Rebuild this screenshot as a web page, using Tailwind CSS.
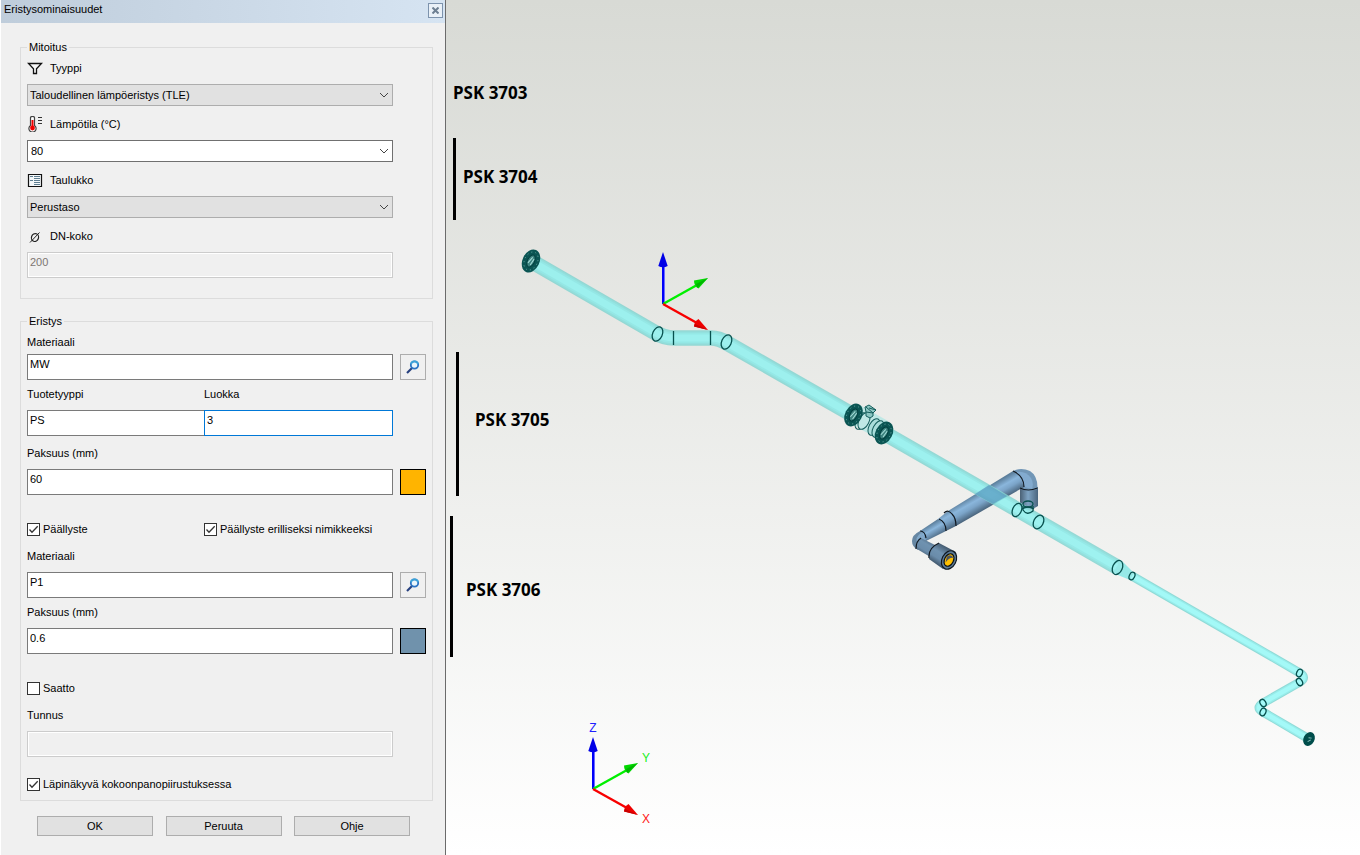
<!DOCTYPE html>
<html lang="fi">
<head>
    <meta charset="UTF-8">
    <meta name="viewport" content="width=device-width, initial-scale=1.0">
    <title>Eristysominaisuudet</title>
    <script src="https://cdn.jsdelivr.net/npm/@tailwindcss/browser@4"></script>
</head>
<body class="flex min-h-screen bg-white font-['Liberation_Sans',sans-serif] text-[11px] leading-4 text-black">

    <!-- Insulation properties dialog -->
    <form class="w-[446px] shrink-0 border-l border-l-white border-r border-r-[#6b6b6b] bg-[#f0f0f0]">
        <header class="flex h-[23px] items-start justify-between bg-linear-to-r from-[#bfcddb] to-[#d6e4f2] pl-[3px] pr-[2px] pt-[1px]">
            <h1>Eristysominaisuudet</h1>
            <button type="button" aria-label="Sulje" class="mt-[2px] flex size-[15px] items-center justify-center border border-[#7d93ad] bg-[#e9f0f7]">
                <svg class="size-[7px]" viewBox="0 0 7 7" stroke="#6d7f92" stroke-width="2"><path d="M0.5 0.5L6.5 6.5M6.5 0.5L0.5 6.5"/></svg>
            </button>
        </header>

        <div class="pl-[19px] pr-3 pt-[17px]">
            <fieldset class="border border-[#dcdcdc] px-[6px] pb-5">
                <legend class="px-[2px] leading-[14px]">Mitoitus</legend>

                <div class="mr-[33px] flex flex-col gap-2 pt-[6px]">
                    <label for="type" class="flex items-center gap-[7px]">
                        <svg class="size-4" viewBox="0 0 16 16" fill="none" stroke="#111" stroke-width="1.3"><path d="M1.5 3.5H14.5L9.5 8.8V13.5H6.5V8.8Z" fill="#f8f8f8"/></svg>
                        Tyyppi
                    </label>
                    <div class="relative mb-[2px]">
                        <select id="type" class="block h-[22px] w-full appearance-none border border-[#adadad] bg-[#e1e1e1] px-[2px]">
                            <option>Taloudellinen lämpöeristys (TLE)</option>
                        </select>
                        <svg class="pointer-events-none absolute right-1 top-[8px] h-[6px] w-[10px]" viewBox="0 0 10 6" fill="none" stroke="#444"><path d="M1 1L5 5L9 1"/></svg>
                    </div>

                    <label for="temp" class="flex items-center gap-[7px]">
                        <svg class="size-4" viewBox="0 0 16 16" fill="none">
                            <path d="M3.5 9.5V1.5Q3.5 0.5 5.5 0.5Q7.5 0.5 7.5 1.5V9.5A3.6 3.6 0 1 1 3.5 9.5Z" fill="#fff" stroke="#444" stroke-width="1.2"/>
                            <path d="M5.5 4V11" stroke="#f00000" stroke-width="2"/>
                            <circle cx="5.5" cy="12" r="2.4" fill="#f00000"/>
                            <path d="M11 1.5H15M11 4.5H15M11 7.5H15" stroke="#333"/>
                        </svg>
                        Lämpötila (°C)
                    </label>
                    <div class="relative mb-[2px]">
                        <select id="temp" class="block h-[22px] w-full appearance-none border border-[#707070] bg-white px-[3px]">
                            <option>80</option>
                        </select>
                        <svg class="pointer-events-none absolute right-1 top-[8px] h-[6px] w-[10px]" viewBox="0 0 10 6" fill="none" stroke="#444"><path d="M1 1L5 5L9 1"/></svg>
                    </div>

                    <label for="table" class="flex items-center gap-[7px]">
                        <svg class="size-4" viewBox="0 0 16 16" fill="none">
                            <path d="M1.5 2.5H14.5V14.5H1.5Z" fill="#f4f8fa" stroke="#111" stroke-width="1.2"/>
                            <path d="M3 4.5H6M3 8.5H6M7 4.5H13M7 6.5H13M7 8.5H13M7 10.5H13M7 12.5H13" stroke="#5f7f92"/>
                        </svg>
                        Taulukko
                    </label>
                    <div class="relative mb-[2px]">
                        <select id="table" class="block h-[22px] w-full appearance-none border border-[#adadad] bg-[#e1e1e1] px-[2px]">
                            <option>Perustaso</option>
                        </select>
                        <svg class="pointer-events-none absolute right-1 top-[8px] h-[6px] w-[10px]" viewBox="0 0 10 6" fill="none" stroke="#444"><path d="M1 1L5 5L9 1"/></svg>
                    </div>

                    <label for="dn" class="flex items-center gap-[7px]">
                        <svg class="size-4" viewBox="0 0 16 16" fill="none" stroke="#222"><ellipse cx="8" cy="9.5" rx="3.5" ry="4" transform="rotate(20 8 9.5)" stroke-width="1.2"/><path d="M3 14.5L12.5 4.5"/></svg>
                        DN-koko
                    </label>
                    <input id="dn" type="text" value="200" disabled class="h-[26px] border border-[#cccccc] bg-[#f0f0f0] px-[2px] pb-[6px] text-[#7d7672] shadow-[inset_0_0_0_1px_#fff]">
                </div>
            </fieldset>

            <fieldset class="mt-[15px] border border-[#dcdcdc] px-[6px] pb-2">
                <legend class="px-[2px] leading-[14px]">Eristys</legend>

                <label for="material" class="block pt-[6px]">Materiaali</label>
                <div class="mt-1 flex gap-[7px]">
                    <input id="material" type="text" value="MW" class="h-[26px] min-w-0 flex-1 border border-[#7a7a7a] bg-white px-[2px] pb-[6px]">
                    <button type="button" aria-label="Hae materiaali" class="flex size-[26px] items-center justify-center border border-[#adadad]">
                        <svg class="size-4" viewBox="0 0 16 16" fill="none"><path d="M7 9L2 14" stroke="#27407f" stroke-width="2.2"/><circle cx="9.5" cy="6" r="3.7" fill="#eaf6fc" stroke="#2b73c4" stroke-width="1.8"/><path d="M5.9 5.2A3.7 3.7 0 0 1 13.1 5.2" stroke="#3ba3d8" stroke-width="1.8"/></svg>
                    </button>
                </div>

                <div class="mr-[33px] mt-[6px] grid grid-cols-[177px_1fr] gap-y-2">
                    <label for="product">Tuotetyyppi</label>
                    <label for="class">Luokka</label>
                    <input id="product" type="text" value="PS" class="h-[26px] min-w-0 border border-r-0 border-[#7a7a7a] bg-white px-[2px] pb-[6px]">
                    <input id="class" type="text" value="3" class="h-[26px] min-w-0 border border-[#0078d7] bg-white px-[2px] pb-[6px] outline-none">
                </div>

                <label for="thickness" class="mt-[9px] block">Paksuus (mm)</label>
                <div class="mt-2 flex gap-[7px]">
                    <input id="thickness" type="text" value="60" class="h-[26px] min-w-0 flex-1 border border-[#7a7a7a] bg-white px-[2px] pb-[6px]">
                    <button type="button" aria-label="Eristyksen väri" class="size-[26px] border border-black bg-[#ffb400]"></button>
                </div>

                <div class="mt-[26px] grid grid-cols-[177px_1fr]">
                    <label class="relative flex items-center gap-[3px]">
                        <input type="checkbox" checked class="peer size-[13px] appearance-none border border-[#333] bg-white">
                        <svg class="pointer-events-none absolute left-0 hidden size-[13px] peer-checked:block" viewBox="0 0 13 13" fill="none" stroke="#333" stroke-width="1.3"><path d="M2.5 6.5L5 9.3L10.7 3.3"/></svg>
                        Päällyste
                    </label>
                    <label class="relative flex items-center gap-[3px]">
                        <input type="checkbox" checked class="peer size-[13px] appearance-none border border-[#333] bg-white">
                        <svg class="pointer-events-none absolute left-0 hidden size-[13px] peer-checked:block" viewBox="0 0 13 13" fill="none" stroke="#333" stroke-width="1.3"><path d="M2.5 6.5L5 9.3L10.7 3.3"/></svg>
                        Päällyste erilliseksi nimikkeeksi
                    </label>
                </div>

                <label for="coating" class="mt-[11px] block">Materiaali</label>
                <div class="mt-2 flex gap-[7px]">
                    <input id="coating" type="text" value="P1" class="h-[26px] min-w-0 flex-1 border border-[#7a7a7a] bg-white px-[2px] pb-[6px]">
                    <button type="button" aria-label="Hae päällyste" class="flex size-[26px] items-center justify-center border border-[#adadad]">
                        <svg class="size-4" viewBox="0 0 16 16" fill="none"><path d="M7 9L2 14" stroke="#27407f" stroke-width="2.2"/><circle cx="9.5" cy="6" r="3.7" fill="#eaf6fc" stroke="#2b73c4" stroke-width="1.8"/><path d="M5.9 5.2A3.7 3.7 0 0 1 13.1 5.2" stroke="#3ba3d8" stroke-width="1.8"/></svg>
                    </button>
                </div>

                <label for="coating-thickness" class="mt-[6px] block">Paksuus (mm)</label>
                <div class="mt-2 flex gap-[7px]">
                    <input id="coating-thickness" type="text" value="0.6" class="h-[26px] min-w-0 flex-1 border border-[#7a7a7a] bg-white px-[2px] pb-[6px]">
                    <button type="button" aria-label="Päällysteen väri" class="size-[26px] border border-black bg-[#7092ac]"></button>
                </div>

                <label class="relative mt-[26px] flex items-center gap-[3px]">
                    <input type="checkbox" class="peer size-[13px] appearance-none border border-[#333] bg-white">
                    <svg class="pointer-events-none absolute left-0 hidden size-[13px] peer-checked:block" viewBox="0 0 13 13" fill="none" stroke="#333" stroke-width="1.3"><path d="M2.5 6.5L5 9.3L10.7 3.3"/></svg>
                    Saatto
                </label>

                <label for="tag" class="mt-[11px] block">Tunnus</label>
                <div class="mr-[33px] mt-2 flex">
                    <input id="tag" type="text" disabled class="h-[26px] min-w-0 flex-1 border border-[#cccccc] bg-[#f0f0f0] px-[2px] pb-[6px] shadow-[inset_0_0_0_1px_#fff]">
                </div>

                <label class="relative mt-[19px] flex items-center gap-[3px]">
                    <input type="checkbox" checked class="peer size-[13px] appearance-none border border-[#333] bg-white">
                    <svg class="pointer-events-none absolute left-0 hidden size-[13px] peer-checked:block" viewBox="0 0 13 13" fill="none" stroke="#333" stroke-width="1.3"><path d="M2.5 6.5L5 9.3L10.7 3.3"/></svg>
                    Läpinäkyvä kokoonpanopiirustuksessa
                </label>
            </fieldset>

            <div class="ml-[17px] mr-[23px] mt-[15px] flex justify-between">
                <button type="submit" class="h-5 w-[116px] border border-[#adadad] bg-[#e1e1e1]">OK</button>
                <button type="button" class="h-5 w-[116px] border border-[#adadad] bg-[#e1e1e1]">Peruuta</button>
                <button type="button" class="h-5 w-[116px] border border-[#adadad] bg-[#e1e1e1]">Ohje</button>
            </div>
        </div>
    </form>

    <!-- 3D view of the pipeline -->
    <main class="min-w-0 flex-1 bg-linear-to-b from-[#d8dad5] to-white">
        <svg class="block w-full" viewBox="446 0 914 855" fill="none" role="img" aria-label="Putkilinja">
            <defs>
                <linearGradient id="blueUp" gradientUnits="userSpaceOnUse" x1="980" y1="491" x2="989" y2="507">
                    <stop offset="0" stop-color="#5c7f9c"/><stop offset=".35" stop-color="#8ab6dc"/><stop offset=".6" stop-color="#7ba4c8"/><stop offset="1" stop-color="#4b667e"/>
                </linearGradient>
                <linearGradient id="blueSmall" gradientUnits="userSpaceOnUse" x1="929" y1="525" x2="936" y2="537">
                    <stop offset="0" stop-color="#5c7f9c"/><stop offset=".4" stop-color="#8ab6dc"/><stop offset="1" stop-color="#4f6c86"/>
                </linearGradient>
                <linearGradient id="blueDown" gradientUnits="userSpaceOnUse" x1="946" y1="546" x2="935" y2="564">
                    <stop offset="0" stop-color="#40566a"/><stop offset=".4" stop-color="#6f92b0"/><stop offset=".7" stop-color="#6a8caa"/><stop offset="1" stop-color="#3e5468"/>
                </linearGradient>
                <linearGradient id="blueVert" gradientUnits="userSpaceOnUse" x1="1020" y1="0" x2="1038" y2="0">
                    <stop offset="0" stop-color="#4a6074"/><stop offset=".45" stop-color="#7da2c2"/><stop offset="1" stop-color="#4a657e"/>
                </linearGradient>

                <!-- main pipe run, shaded by stacking narrower strokes -->
                <path id="wide" d="M531 261L654 332Q664 338 674 338H711Q719 338 727 343L853 415M884 433L1117 567"/>
                <path id="thin" d="M1132 576L1300 673Q1307 677.5 1300 682L1263 703Q1255 708 1263 712L1309 739"/>

                <g id="flange">
                    <ellipse rx="8.5" ry="12" fill="#0a5553"/>
                    <ellipse rx="6.5" ry="9.5" stroke="#65a5a1" stroke-width="0.8" stroke-dasharray="1.2 3"/>
                    <ellipse rx="3.5" ry="6.5" fill="#3d8480" stroke="#013f3e"/>
                    <path d="M-2 3L0 -4M1 4L2 -3" stroke="#a7dfda"/>
                </g>

                <g id="axes">
                    <path d="M0.5 0V-38" stroke="#0000fa" stroke-width="3"/>
                    <path d="M1.5 -1V-37" stroke="#6c6cff"/>
                    <path d="M0 0L34 -19" stroke="#00f000" stroke-width="2.4"/>
                    <path d="M0 0L34 19" stroke="#f80000" stroke-width="2.4"/>
                    <path d="M0 -52L4.7 -38Q0 -35.5 -4.7 -38Z" fill="#0000e6"/>
                    <path d="M45 -26L35.5 -15.5Q31 -18 31 -23.5Z" fill="#00d800"/>
                    <path d="M45 26L31 22.5Q31 17.5 35.5 15Z" fill="#ee0000"/>
                    <path d="M45 -26L34 -16L33 -20Z" fill="#00b400"/>
                    <path d="M45 26L31 22.5L32 20Z" fill="#c80000"/>
                </g>
            </defs>

            <!-- blue branch -->
            <path d="M1020 487H1038V506Q1029 513 1020 506Z" fill="url(#blueVert)"/>
            <path d="M1013 471Q1021 467 1030 471Q1038 476 1037.5 489Q1029 492 1020 488L1024 486Z" fill="#7196b6"/>
            <path d="M1014 473Q1024 469 1031 478Q1034 483 1032 489L1024 487Z" fill="#83abcf"/>
            <path d="M948 511L1013 471Q1021 475 1024 487L956 526Z" fill="url(#blueUp)"/>
            <path d="M938 519L948 511Q955 517 956 526L946 531Z" fill="url(#blueUp)"/>
            <path d="M920 531L938 519Q945 523 946 531L926 541Z" fill="url(#blueSmall)"/>
            <path d="M920 531Q912 535 912 541Q912 547 918 550L927 542Z" fill="#6687a3"/>
            <path d="M921 533Q915 537 917 543L926 540Z" fill="#82a9cb"/>
            <path d="M921 538L939 547L932 558L917 549Q916 542 921 538Z" fill="url(#blueDown)"/>
            <path d="M939 543L956 552Q950 566 943 569L929 559Q929 547 939 543Z" fill="url(#blueDown)"/>
            <g stroke="#101820" stroke-width="1.2">
                <path d="M1013 471Q1024 476 1024 487M1020 488Q1028 492 1037.5 488M944 513Q948 509 952 514Q956 518 956 526M939 519Q946 522 946 531M920 531Q925 531 926 538M916 549Q916 541 921 538M929 558Q928 548 939 543"/>
            </g>
            <g transform="translate(949 560) rotate(27)">
                <ellipse rx="7" ry="9.7" fill="#5d7d99" stroke="#101820" stroke-width="1.2"/>
                <ellipse rx="4.5" ry="6.6" fill="#ffc000" stroke="#0b1118" stroke-width="1.2"/>
                <path d="M-3.5 -2Q-1 -7 3 -4Q-1 -3 -2 4Z" fill="#4c5560"/>
            </g>

            <!-- transparent insulated pipes -->
            <g opacity=".85">
                <use href="#wide" stroke="#86d5d1" stroke-width="15.5"/>
                <use href="#wide" stroke="#84dedb" stroke-width="13"/>
                <use href="#wide" stroke="#87e8e6" stroke-width="10.5"/>
                <use href="#wide" stroke="#90f2f0" stroke-width="7"/>
                <path d="M1121 560L1134 573L1130 580L1113 573Z" fill="#87e8e6"/>
                <use href="#thin" stroke="#7fd6d2" stroke-width="9"/>
                <use href="#thin" stroke="#88ecea" stroke-width="7"/>
                <use href="#thin" stroke="#96faf8" stroke-width="4.5"/>
            </g>
            <path d="M989 485L1007 496L993 504L975 494Z" fill="#5a98c0" opacity=".7"/>

            <!-- valve body between the flanges -->
            <path d="M860 405L888 421L878 439L848 422Z" fill="#bfe8e5"/>
            <g stroke="#155e5c">
                <ellipse cx="861" cy="421" rx="5" ry="9" transform="rotate(27 861 421)"/>
                <ellipse cx="864" cy="421" rx="5" ry="9" transform="rotate(27 864 421)" fill="#bfe8e5"/>
                <ellipse cx="874" cy="427" rx="5" ry="9" transform="rotate(27 874 427)" fill="#a9dedb"/>
                <ellipse cx="878" cy="429" rx="5" ry="9" transform="rotate(27 878 429)" fill="#a9dedb"/>
                <path d="M865 407L869 405L876 410L873 413L866 412ZM866 412V416L870 418L873 416V413M866 407L873 413M869 408L876 410" fill="#8cc7c3"/>
            </g>
            <use href="#flange" transform="translate(531 261) rotate(25)"/>
            <use href="#flange" transform="translate(853.5 415) rotate(27)"/>
            <use href="#flange" transform="translate(884 433) rotate(27)"/>
            <g transform="translate(1309 739) rotate(27)">
                <ellipse rx="5.5" ry="7.2" fill="#004d4b"/>
                <path d="M-1 -1L2 -2M0 3L2 0" stroke="#8fc5c1"/>
            </g>

            <!-- joints -->
            <g stroke="#07504e" stroke-width="1.3">
                <ellipse cx="657.5" cy="334" rx="4.8" ry="7.5" transform="rotate(24 657.5 334)"/>
                <path d="M673.5 331V345M710.5 331V345"/>
                <ellipse cx="726.5" cy="342" rx="4.8" ry="7.5" transform="rotate(24 726.5 342)"/>
                <ellipse cx="1017" cy="510" rx="4.4" ry="7" transform="rotate(24 1017 510)"/>
                <ellipse cx="1038.5" cy="522" rx="4.8" ry="7.2" transform="rotate(27 1038.5 522)"/>
                <ellipse cx="1028" cy="504" rx="5" ry="3"/>
                <path d="M1023 506V510Q1027 516 1033 511V506"/>
                <path d="M1022 509Q1028 505 1034 509"/>
                <ellipse cx="1117.5" cy="567.5" rx="4.8" ry="7.4" transform="rotate(24 1117.5 567.5)"/>
                <ellipse cx="1132" cy="576" rx="2.7" ry="4" transform="rotate(24 1132 576)"/>
                <ellipse cx="1299.5" cy="673" rx="2.8" ry="3.9" transform="rotate(24 1299.5 673)"/>
                <ellipse cx="1299.5" cy="682" rx="2.8" ry="3.9" transform="rotate(-30 1299.5 682)"/>
                <ellipse cx="1263" cy="703" rx="2.8" ry="3.9" transform="rotate(-30 1263 703)"/>
                <ellipse cx="1263" cy="712" rx="2.8" ry="3.9" transform="rotate(24 1263 712)"/>
            </g>

            <use href="#axes" x="663" y="304"/>
            <use href="#axes" x="593" y="789"/>
            <g class="font-['Liberation_Sans',sans-serif] text-[12px]" text-anchor="middle">
                <text x="593" y="732" fill="#2020ff">Z</text>
                <text x="646" y="762" fill="#20f020">Y</text>
                <text x="646" y="823" fill="#ff2020">X</text>
            </g>

            <!-- standard references -->
            <path d="M454.5 138V220M457.5 352V496M451.5 516V657" stroke="#000" stroke-width="3"/>
            <g class="font-['Noto_Sans','Open_Sans',sans-serif] text-[17px] font-bold" fill="#000">
                <text x="453" y="99">PSK 3703</text>
                <text x="463" y="183">PSK 3704</text>
                <text x="475" y="426">PSK 3705</text>
                <text x="466" y="596">PSK 3706</text>
            </g>
        </svg>
    </main>
</body>
</html>
